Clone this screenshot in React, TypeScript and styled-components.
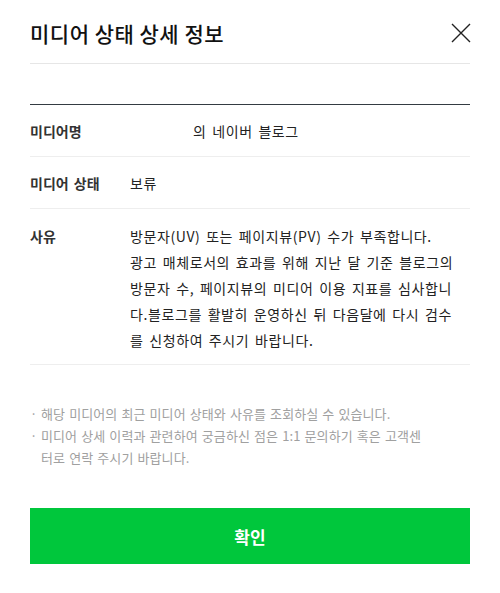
import React from "react";
import styled, { createGlobalStyle } from "styled-components";

const GlobalStyle = createGlobalStyle`
  html, body {
    margin: 0;
    padding: 0;
    background: #fff;
  }
  body {
    font-family: "Noto Sans CJK KR", "Noto Sans", sans-serif;
    color: #222;
  }
  * {
    box-sizing: border-box;
  }
`;

const Modal = styled.div`
  width: 500px;
  padding: 0 30px;
`;

const Header = styled.div`
  display: flex;
  align-items: center;
  justify-content: space-between;
  height: 64px;
  padding-top: 2px;
  border-bottom: 1px solid #e6e6e6;
`;

const Title = styled.h2`
  margin: 0;
  font-size: 21px;
  font-weight: 500;
  color: #111;
  letter-spacing: 0.5px;
`;

const CloseButton = styled.button`
  display: flex;
  align-items: center;
  justify-content: center;
  width: 20px;
  height: 20px;
  margin-right: -1px;
  padding: 0;
  border: none;
  background: none;
  cursor: pointer;
`;

const InfoTable = styled.div`
  margin-top: 40px;
  border-top: 1px solid #343b42;
`;

const Row = styled.div<{ $tall?: boolean }>`
  display: flex;
  align-items: ${(p) => (p.$tall ? "flex-start" : "center")};
  min-height: 52px;
  padding: ${(p) => (p.$tall ? "14px 0 11px" : "0")};
  border-bottom: 1px solid #eeeeee;
  font-size: 14px;
  word-spacing: 2px;
  line-height: 26px;
`;

const Label = styled.div`
  flex: 0 0 100px;
  font-weight: 700;
  color: #333;
`;

const Value = styled.div`
  flex: 1;
  color: #222;
  letter-spacing: 0.6px;
  white-space: nowrap;
`;

const Line = styled.span`
  display: block;
`;

const Hidden = styled.span`
  display: inline-block;
  width: 63px;
`;

const Notes = styled.ul`
  list-style: none;
  margin: 38px 0 0;
  padding: 0;
  font-size: 13px;
  word-spacing: 1px;
  letter-spacing: 0.1px;
  line-height: 22px;
  color: #a0a0a0;
`;

const Note = styled.li`
  position: relative;
  padding-left: 11px;
  white-space: nowrap;

  &::before {
    content: "·";
    position: absolute;
    left: 0;
    top: 0;
  }
`;

const ConfirmButton = styled.button`
  display: block;
  width: 100%;
  height: 56px;
  margin-top: 39px;
  border: none;
  background: #00c73c;
  color: #fff;
  font-family: "Noto Sans CJK KR", sans-serif;
  font-size: 17px;
  font-weight: 700;
  cursor: pointer;
`;

const reason = [
  "방문자(UV) 또는 페이지뷰(PV) 수가 부족합니다.",
  "광고 매체로서의 효과를 위해 지난 달 기준 블로그의",
  "방문자 수, 페이지뷰의 미디어 이용 지표를 심사합니",
  "다.블로그를 활발히 운영하신 뒤 다음달에 다시 검수",
  "를 신청하여 주시기 바랍니다.",
];

export default function App() {
  return (
    <>
      <GlobalStyle />
      <Modal>
        <Header>
          <Title>미디어 상태 상세 정보</Title>
          <CloseButton aria-label="닫기">
            <svg width="20" height="20" viewBox="0 0 20 20">
              <path d="M1 1L19 19M19 1L1 19" stroke="#222" strokeWidth="1.4" />
            </svg>
          </CloseButton>
        </Header>
        <InfoTable>
          <Row>
            <Label>미디어명</Label>
            <Value>
              <Hidden />의 네이버 블로그
            </Value>
          </Row>
          <Row>
            <Label>미디어 상태</Label>
            <Value>보류</Value>
          </Row>
          <Row $tall>
            <Label>사유</Label>
            <Value>
              {reason.map((line) => (
                <Line key={line}>{line}</Line>
              ))}
            </Value>
          </Row>
        </InfoTable>
        <Notes>
          <Note>해당 미디어의 최근 미디어 상태와 사유를 조회하실 수 있습니다.</Note>
          <Note>
            <Line>미디어 상세 이력과 관련하여 궁금하신 점은 1:1 문의하기 혹은 고객센</Line>
            <Line>터로 연락 주시기 바랍니다.</Line>
          </Note>
        </Notes>
        <ConfirmButton>확인</ConfirmButton>
      </Modal>
    </>
  );
}
